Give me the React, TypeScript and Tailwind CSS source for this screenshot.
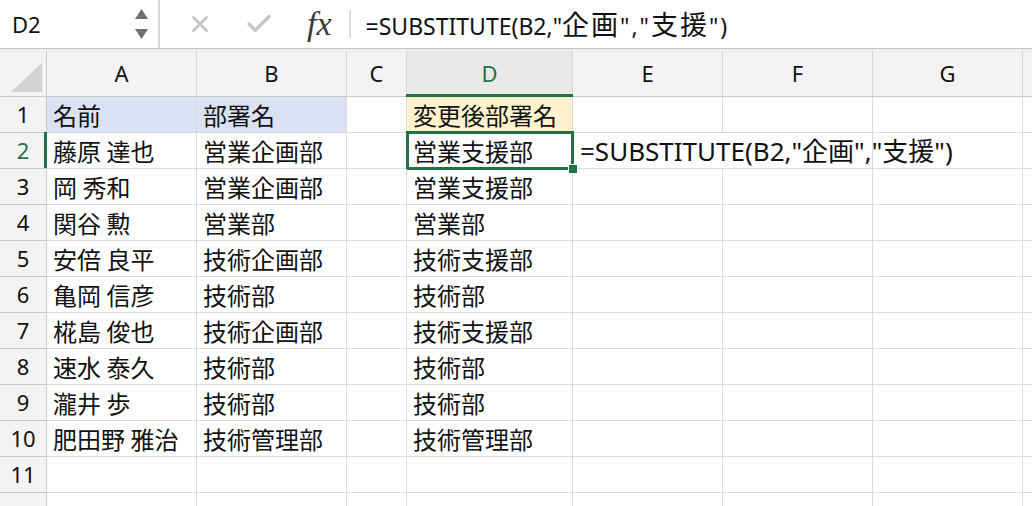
import { X, Check } from 'lucide-react';

const font = "font-['Noto_Sans_CJK_JP','Noto_Sans',sans-serif]";
const latin = "font-['Noto_Sans','Noto_Sans_CJK_JP',sans-serif]";

const columns = [
  { key: 'A', width: 'w-[150px]' },
  { key: 'B', width: 'w-[150px]' },
  { key: 'C', width: 'w-[60px]' },
  { key: 'D', width: 'w-[166px]' },
  { key: 'E', width: 'w-[150px]' },
  { key: 'F', width: 'w-[150px]' },
  { key: 'G', width: 'w-[150px]' },
  { key: 'H', width: 'w-[150px]' },
];

const rows: string[][] = [
  ['名前', '部署名', '', '変更後部署名'],
  ['藤原 達也', '営業企画部', '', '営業支援部', '=SUBSTITUTE(B2,"企画","支援")'],
  ['岡 秀和', '営業企画部', '', '営業支援部'],
  ['関谷 勲', '営業部', '', '営業部'],
  ['安倍 良平', '技術企画部', '', '技術支援部'],
  ['亀岡 信彦', '技術部', '', '技術部'],
  ['椛島 俊也', '技術企画部', '', '技術支援部'],
  ['速水 泰久', '技術部', '', '技術部'],
  ['瀧井 歩', '技術部', '', '技術部'],
  ['肥田野 雅治', '技術管理部', '', '技術管理部'],
  [],
  [],
];

function cellBg(row: number, col: number) {
  if (row === 1 && (col === 0 || col === 1)) return 'bg-[#d9e1f2]';
  if (row === 1 && col === 3) return 'bg-[#fff2cc]';
  return '';
}

function FormulaBar() {
  return (
    <div className="flex h-[49px] items-center bg-white border-b border-[#c4c4c4]">
      <div className="flex h-full w-[160px] shrink-0 items-center justify-between border-r-2 border-[#d6d6d6] pl-[12px] pr-[10px]">
        <span className={`${latin} text-[22px] text-[#111]`}>D2</span>
        <div className="flex flex-col items-center gap-[10px]">
          <svg width="13" height="10" viewBox="0 0 13 10">
            <path d="M6.5 0 L13 10 L0 10 Z" fill="#707070" />
          </svg>
          <svg width="13" height="10" viewBox="0 0 13 10">
            <path d="M0 0 L13 0 L6.5 10 Z" fill="#707070" />
          </svg>
        </div>
      </div>
      <X className="ml-[27px] h-[26px] w-[26px] text-[#c6c6c6]" strokeWidth={2.6} />
      <Check className="ml-[31px] h-[30px] w-[30px] text-[#c6c6c6]" strokeWidth={2.6} />
      <span className="ml-[33px] font-['Liberation_Serif',serif] text-[34px] italic leading-none text-[#3a3a3a]">fx</span>
      <div className="ml-[17px] h-[28px] w-[2px] bg-[#dcdcdc]" />
      <span className={`${latin} ml-[15px] whitespace-nowrap text-[23px] leading-none text-[#111]`}>
        =SUBSTITUTE(B2,"
        <span className={`${font} text-[27px] tracking-[2px]`}>企画</span>
        <span className="tracking-[2px]">","</span>
        <span className={`${font} text-[27px] tracking-[2px]`}>支援</span>
        <span className="tracking-[2px]">")</span>
      </span>
    </div>
  );
}

export default function App() {
  return (
    <div className={`${font} h-[506px] w-[1032px] overflow-hidden bg-white`}>
      <FormulaBar />
      <div className="h-[2px] bg-[#ececec]" />

      {/* column headers */}
      <div className={`${latin} flex h-[46px] border-b border-[#c9c9c9] bg-[#f3f3f3]`}>
        <div className="flex w-[47px] shrink-0 items-end justify-end border-r border-[#c9c9c9] pb-[4px] pr-[4px]">
          <svg width="31" height="29" viewBox="0 0 31 29">
            <path d="M31 0 L31 29 L0 29 Z" fill="#d2d2d2" />
          </svg>
        </div>
        {columns.map((c) => (
          <div
            key={c.key}
            className={`relative flex shrink-0 items-center justify-center border-r border-[#d6d6d6] text-[22px] ${c.width} ${
              c.key === 'D' ? 'bg-[#e9e9e9] text-[#217346]' : 'text-[#111]'
            }`}
          >
            {c.key !== 'H' && c.key}
            {c.key === 'D' && <div className="absolute -bottom-[1px] -left-[1px] -right-[1px] h-[3px] bg-[#217346]" />}
          </div>
        ))}
      </div>

      {/* rows */}
      {rows.map((r, ri) => {
        const rowNum = ri + 1;
        return (
          <div key={rowNum} className="flex h-[36px]">
            <div
              className={`${latin} relative flex w-[47px] shrink-0 items-center justify-center border-r border-b border-[#c9c9c9] bg-[#f3f3f3] text-[22px] ${
                rowNum === 2 ? 'bg-[#e9e9e9] text-[#217346]' : 'text-[#111]'
              }`}
            >
              {rowNum < 12 && rowNum}
              {rowNum === 2 && <div className="absolute -right-[1px] -top-[1px] bottom-0 w-[3px] bg-[#217346]" />}
            </div>
            {columns.map((c, ci) => {
              const text = r[ci] ?? '';
              const overflow = rowNum === 2 && c.key === 'E';
              const active = rowNum === 2 && c.key === 'D';
              return (
                <div
                  key={c.key}
                  className={`relative flex shrink-0 items-center whitespace-nowrap border-b border-[#dadada] text-[24px] leading-none text-[#111] ${c.width} ${cellBg(
                    rowNum,
                    ci
                  )} ${overflow ? `${latin} z-10 pl-[7px] text-[26px]` : 'border-r pl-[6px]'}`}
                >
                  {text}
                  {active && (
                    <>
                      <div className="pointer-events-none absolute -left-[1px] -right-[2px] -top-[2px] -bottom-[2px] border-[3px] border-[#217346]" />
                      <div className="absolute -bottom-[6px] -right-[6px] z-20 h-[10px] w-[10px] border border-white bg-[#217346]" />
                    </>
                  )}
                </div>
              );
            })}
          </div>
        );
      })}
    </div>
  );
}
